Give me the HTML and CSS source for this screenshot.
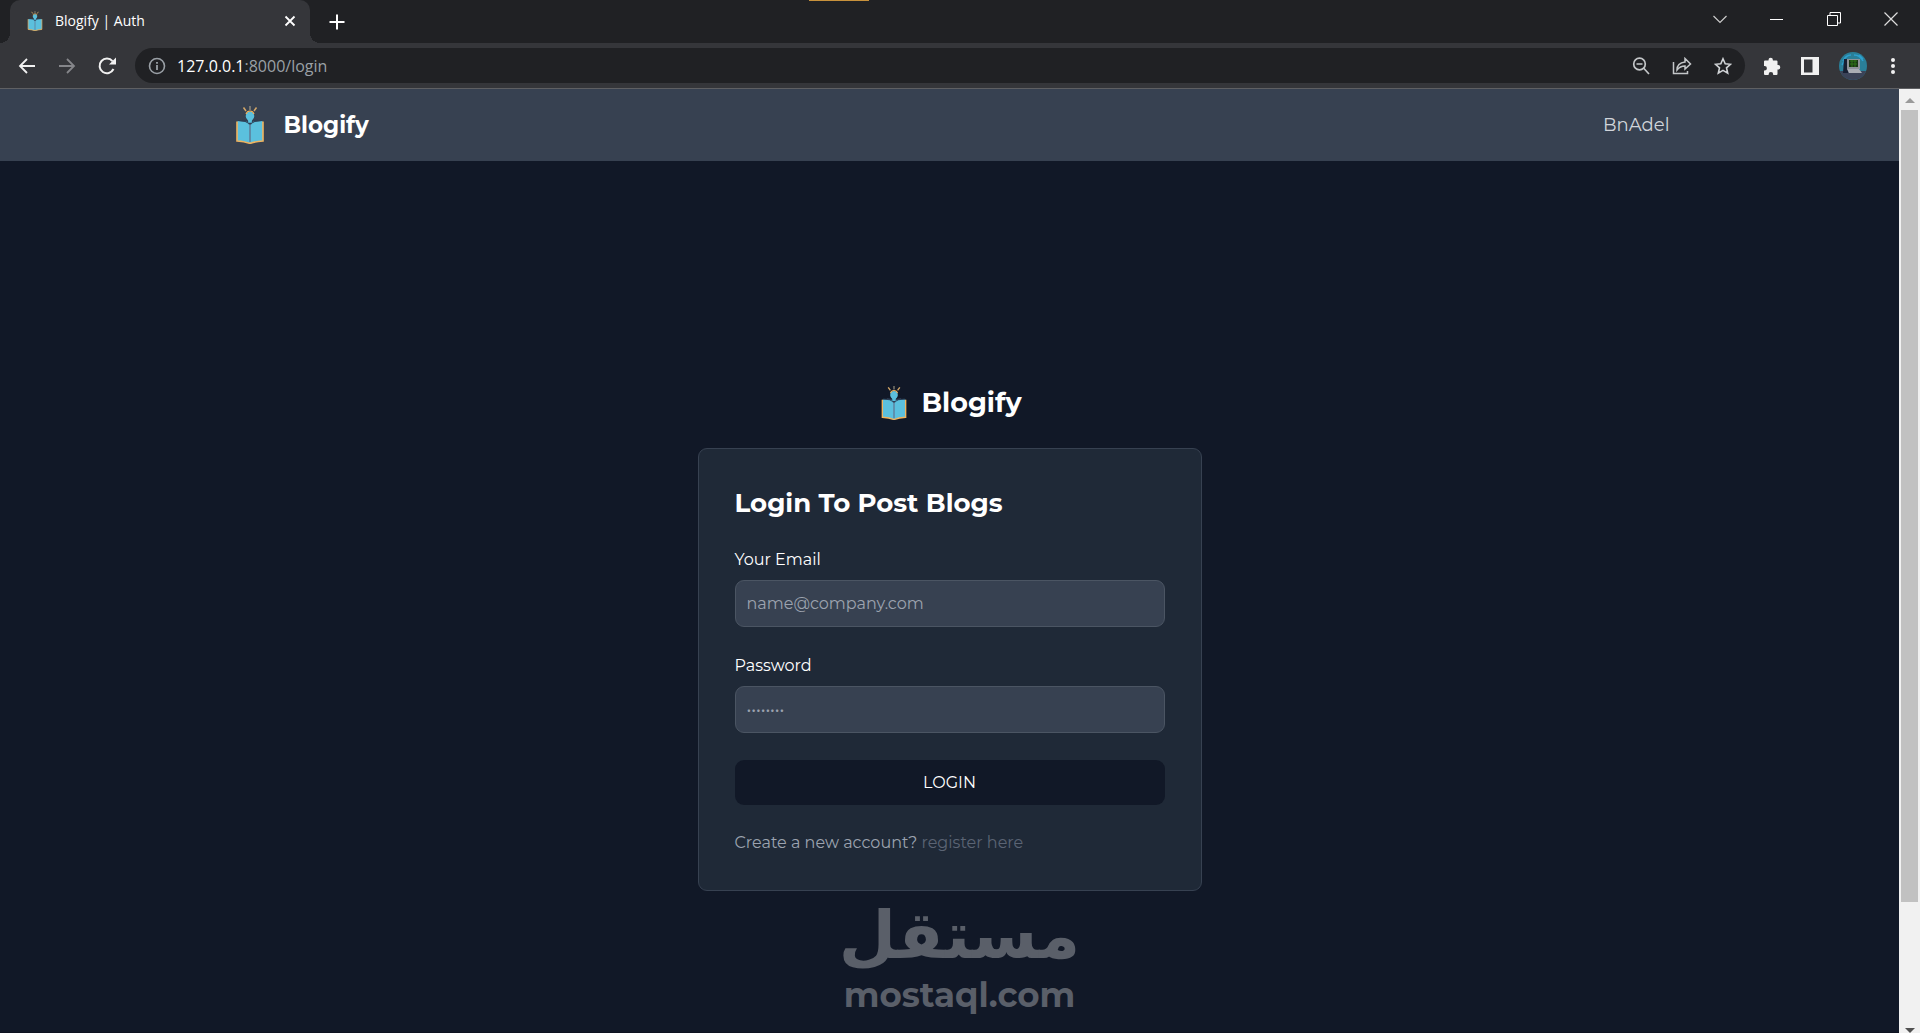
FILE: index.html
```html
<!DOCTYPE html>
<html lang="en">
<head>
    <meta charset="UTF-8">
    <meta name="viewport" content="width=device-width, initial-scale=1.0">
    <title>Blogify | Auth</title>
    <link rel="stylesheet" href="styles.css">
</head>
<body>
    <svg class="sprite" aria-hidden="true">
        <symbol id="logo" viewBox="0 0 28 38">
            <path d="M1 15.500V35q8 .5 13 2.500 5-2 13-2.500V15.500" fill="#5bc0de" stroke="#f0b35e" stroke-width="1.600"/>
            <path d="M2 15q8 .5 12 3 4-2.500 12-3v18q-8 .5-12 2.500-4-2-12-2.500z" fill="#5bc0de"/>
            <path d="M14 18v18" stroke="#5f7f9b" stroke-width="1.600"/>
            <path d="M2 14.500q8 0 12 3.500 4-3.500 12-3.500M6 14q5 0 8 3 3-3 8-3" fill="none" stroke="#2c3e55" stroke-width="1"/>
            <path d="M14 5.500a4.300 4.800 0 0 1 4.300 4.800q0 2-2.300 4.200l-.5 2.500h-3l-.5-2.500q-2.300-2.200-2.300-4.200A4.300 4.800 0 0 1 14 5.500z" fill="#5bc0de"/>
            <path d="M10 8q1-3 4-3t4 3" fill="none" stroke="#f0b35e" stroke-width="1.200"/>
            <path d="M7.500 1.500l2.500 3.500M20.500 1.500L18 5" stroke="#d4a767" stroke-width="1.500"/>
            <path d="M14 0v4" stroke="#a59a84" stroke-width="1.200"/>
            <path d="M12.500 17.500h3" stroke="#2c3e55" stroke-width="1.500"/>
        </symbol>
    </svg>

    <!-- browser window -->
    <div class="tab-bar">
        <span class="top-mark"></span>
        <div class="tab">
            <svg class="tab-icon"><use href="#logo"/></svg>
            <span class="tab-title">Blogify | Auth</span>
            <button type="button" class="icon-btn" aria-label="Close tab">
                <svg width="12" height="12" viewBox="0 0 12 12"><path d="M1.500 1.500l9 9M10.500 1.500l-9 9" stroke="#fff" stroke-width="1.800"/></svg>
            </button>
        </div>
        <button type="button" class="icon-btn new-tab" aria-label="New tab">
            <svg width="16" height="16" viewBox="0 0 16 16"><path d="M8 .5v15M.5 8h15" stroke="#fff" stroke-width="2"/></svg>
        </button>
        <div class="window-buttons">
            <button type="button" class="icon-btn" aria-label="Search tabs">
                <svg width="14" height="14" viewBox="0 0 14 14"><path d="M.5 4L7 10.500 13.500 4" fill="none" stroke="#ccc" stroke-width="1.200"/></svg>
            </button>
            <button type="button" class="icon-btn" aria-label="Minimize">
                <svg width="14" height="14" viewBox="0 0 14 14"><path d="M0 7.500h13" stroke="#fff"/></svg>
            </button>
            <button type="button" class="icon-btn" aria-label="Restore">
                <svg width="14" height="14" viewBox="0 0 14 14"><path d="M.5 3.500h10v10H.5zM3 3V.5h10.500V11H11" fill="none" stroke="#fff"/></svg>
            </button>
            <button type="button" class="icon-btn" aria-label="Close">
                <svg width="14" height="14" viewBox="0 0 14 14"><path d="M.5 .5l13 13M13.500 .5l-13 13" stroke="#ddd" stroke-width="1.200"/></svg>
            </button>
        </div>
    </div>

    <div class="toolbar">
        <button type="button" class="icon-btn" aria-label="Back">
            <svg width="18" height="18" viewBox="0 0 18 18"><path d="M17 9H2M9 2L2 9l7 7" fill="none" stroke="#f1f1f1" stroke-width="1.800"/></svg>
        </button>
        <button type="button" class="icon-btn" aria-label="Forward">
            <svg width="18" height="18" viewBox="0 0 18 18"><path d="M1 9h15M9 2l7 7-7 7" fill="none" stroke="#85868a" stroke-width="1.800"/></svg>
        </button>
        <button type="button" class="icon-btn" aria-label="Reload">
            <svg width="18" height="18" viewBox="0 0 18 18"><path d="M15.500 12A7.300 7.300 0 1 1 14.500 4.200" fill="none" stroke="#f1f1f1" stroke-width="2"/><path d="M18 .5V7.500H11z" fill="#f1f1f1"/></svg>
        </button>
        <div class="address-bar">
            <svg width="18" height="18" viewBox="0 0 18 18"><circle cx="9" cy="9" r="7.500" fill="none" stroke="#9aa0a6" stroke-width="1.600"/><path d="M9 8v5M9 5v1.800" stroke="#9aa0a6" stroke-width="1.800"/></svg>
            <span class="url"><span class="url-host">127.0.0.1</span>:8000/login</span>
            <button type="button" class="icon-btn" aria-label="Zoom">
                <svg width="18" height="18" viewBox="0 0 18 18"><circle cx="7.500" cy="7" r="5.800" fill="none" stroke="#c4c7c9" stroke-width="1.700"/><path d="M4.500 7h6M11.500 11l5.500 6" stroke="#c4c7c9" stroke-width="1.700"/></svg>
            </button>
            <button type="button" class="icon-btn" aria-label="Share">
                <svg width="20" height="18" viewBox="0 0 20 18"><path d="M1.500 5v11.500h14V14M5 13q0-7 8-8V1.500L18.500 7 13 12V9q-5 0-8 4z" fill="none" stroke="#c4c7c9" stroke-width="1.500"/></svg>
            </button>
            <button type="button" class="icon-btn" aria-label="Bookmark">
                <svg width="18" height="18" viewBox="0 0 18 18"><path d="M9 1.800l2.200 5 5.300.5-4 3.600 1.200 5.300L9 13.400l-4.700 2.800 1.200-5.300-4-3.600 5.300-.5z" fill="none" stroke="#d0d3d6" stroke-width="1.600"/></svg>
            </button>
        </div>
        <div class="toolbar-end">
            <button type="button" class="icon-btn" aria-label="Extensions">
                <svg width="18" height="18" viewBox="0 0 18 18"><path d="M1 4.500q0-1 1-1h3.500V3a2.200 2.200 0 0 1 4.400 0v.5h3.600q1 0 1 1V8h.5a2.300 2.300 0 0 1 0 4.600h-.5V17q0 1-1 1h-3.300v-.6a2.300 2.300 0 0 0-4.600 0v.6H2q-1 0-1-1v-3.500h.6a2.300 2.300 0 0 0 0-4.600H1z" fill="#f1f1f1"/></svg>
            </button>
            <button type="button" class="icon-btn" aria-label="Side panel">
                <svg width="18" height="18" viewBox="0 0 18 18"><path fill-rule="evenodd" d="M0 0h18v18H0zM3 2.500v13h8.500v-13z" fill="#f1f1f1"/></svg>
            </button>
            <button type="button" class="icon-btn" aria-label="Profile">
                <svg width="28" height="28" viewBox="0 0 28 28">
                    <clipPath id="avatar"><circle cx="14" cy="14" r="14"/></clipPath>
                    <g clip-path="url(#avatar)">
                        <path d="M0 0h28v28H0z" fill="#2a7f98"/>
                        <path d="M4 9q3-6 8-6M15 3q6 0 9 6M20 3l4 4M3 13l3-5" fill="none" stroke="#2da0d0" stroke-width="1.500"/>
                        <path d="M0 19h28v9H0z" fill="#3b4358"/>
                        <path d="M5 7h4v14H4z" fill="#172033"/>
                        <path d="M8 7h13v10H8z" fill="#8d9399"/>
                        <path d="M10 8h9v7h-9z" fill="#193713"/>
                        <path d="M11 9h7M11 12h7M13 8v7M16 8v7" stroke="#2f7516"/>
                        <path d="M8 17h12l3 4H10z" fill="#a9adb5"/>
                    </g>
                </svg>
            </button>
            <button type="button" class="icon-btn menu-btn" aria-label="Menu">
                <svg width="4" height="18" viewBox="0 0 4 18"><g fill="#f1f1f1"><circle cx="2" cy="3" r="2"/><circle cx="2" cy="9" r="2"/><circle cx="2" cy="15" r="2"/></g></svg>
            </button>
        </div>
    </div>

    <div class="viewport">
        <div class="page">
            <nav class="navbar">
                <div class="navbar-inner">
                    <a href="#" class="brand">
                        <svg class="brand-logo"><use href="#logo"/></svg>
                        Blogify
                    </a>
                    <a href="#" class="nav-link">BnAdel</a>
                </div>
            </nav>

            <main class="auth">
                <a href="#" class="auth-brand">
                    <svg class="auth-logo"><use href="#logo"/></svg>
                    Blogify
                </a>
                <div class="card">
                    <h1>Login To Post Blogs</h1>
                    <form>
                        <div class="form-group">
                            <label for="email">Your Email</label>
                            <input type="email" id="email" placeholder="name@company.com">
                        </div>
                        <div class="form-group">
                            <label for="password">Password</label>
                            <input type="password" id="password" placeholder="••••••••">
                        </div>
                        <button type="submit" class="login-btn">LOGIN</button>
                        <p>Create a new account? <a href="#">register here</a></p>
                    </form>
                </div>
                <div class="watermark">
                    <span class="watermark-ar" lang="ar" dir="rtl">مستقل</span>
                    <span class="watermark-en">mostaql.com</span>
                </div>
            </main>
        </div>

        <div class="scrollbar">
            <svg width="10" height="5" viewBox="0 0 10 5"><path d="M0 5l5-5 5 5z" fill="#9a9a9a"/></svg>
            <div class="scroll-track"><div class="scroll-thumb"></div></div>
            <svg width="10" height="5" viewBox="0 0 10 5"><path d="M0 0h10L5 5z" fill="#505050"/></svg>
        </div>
    </div>
</body>
</html>
```
FILE: styles.css
```css
* {
    box-sizing: border-box;
}
body {
    display: flex;
    flex-direction: column;
    height: 100vh;
    margin: 0;
    overflow: hidden;
    background: #111827;
    font-family: Montserrat, Inter, sans-serif;
    font-size: 16px;
}
a {
    color: inherit;
    text-decoration: none;
}
svg {
    display: block;
    flex: none;
}
.sprite {
    position: absolute;
    width: 0;
    height: 0;
}
.icon-btn {
    display: flex;
    align-items: center;
    justify-content: center;
    padding: 0;
    border: none;
    background: none;
    cursor: pointer;
}

/* browser tabs */
.tab-bar {
    position: relative;
    display: flex;
    height: 43px;
    padding-left: 10px;
    background: #202124;
    font-family: "Open Sans", sans-serif;
}
.top-mark {
    position: absolute;
    top: 0;
    left: 809px;
    width: 60px;
    height: 1px;
    background: #c8923c;
}
.tab {
    position: relative;
    display: flex;
    align-items: center;
    width: 300px;
    padding: 0 14px 2px 15px;
    border-radius: 10px 10px 0 0;
    background: #35363a;
    color: #fff;
    font-size: 14px;
}
.tab::before,
.tab::after {
    content: "";
    position: absolute;
    bottom: 0;
    width: 10px;
    height: 10px;
}
.tab::before {
    right: 100%;
    background: radial-gradient(circle at 0 0, #202124 10px, #35363a 10px);
}
.tab::after {
    left: 100%;
    background: radial-gradient(circle at 100% 0, #202124 10px, #35363a 10px);
}
.tab-icon {
    width: 20px;
    height: 20px;
    margin-right: 10px;
}
.tab-title {
    flex: 1;
}
.new-tab {
    margin-left: 19px;
}
.window-buttons {
    display: flex;
    gap: 43px;
    height: 37px;
    margin-left: auto;
    padding-right: 22px;
}

/* toolbar */
.toolbar {
    display: flex;
    align-items: center;
    height: 46px;
    padding: 0 21px 0 18px;
    gap: 22px;
    border-bottom: 1px solid #5f6063;
    background: #35363a;
}
.address-bar {
    display: flex;
    flex: 1;
    align-items: center;
    gap: 22px;
    height: 35px;
    margin: 0 -4px 0 -3px;
    padding: 0 13px 0 13px;
    border-radius: 18px;
    background: #202124;
}
.url {
    flex: 1;
    margin-left: -11px;
    color: #9aa0a6;
    font-family: "Open Sans", sans-serif;
    font-size: 16px;
}
.url-host {
    color: #fff;
}
.toolbar-end {
    display: flex;
    align-items: center;
    gap: 20px;
}
.menu-btn {
    width: 12px;
}

/* page and its scrollbar */
.viewport {
    display: flex;
    flex: 1;
    min-height: 0;
}
.page {
    flex: 1;
    overflow: hidden;
    border-bottom: 1px solid #0d1220;
}
.scrollbar {
    display: flex;
    flex-direction: column;
    align-items: center;
    width: 21px;
    padding-top: 9px;
    background: #f1f1f1;
}
.scroll-track {
    flex: 1;
    width: 17px;
    margin-top: 7px;
}
.scroll-thumb {
    height: 86.3%;
    background: #c1c1c1;
}

.navbar {
    background: #374151;
}
.navbar-inner {
    display: flex;
    align-items: center;
    justify-content: space-between;
    max-width: 1440px;
    height: 72px;
    margin: 0 auto;
    padding: 0 0 0 6px;
}
.brand {
    display: flex;
    align-items: center;
    gap: 20px;
    color: #fff;
    font-size: 23px;
    font-weight: 700;
}
.brand-logo {
    width: 28px;
    height: 38px;
}
.nav-link {
    color: #d1d5db;
    font-size: 18px;
}

.auth {
    display: flex;
    flex-direction: column;
    align-items: center;
    padding-top: 220px;
}
.auth-brand {
    display: flex;
    align-items: center;
    gap: 14px;
    height: 43px;
    margin-bottom: 24px;
    padding-left: 4px;
    color: #fff;
    font-size: 27px;
    font-weight: 700;
}
.auth-logo {
    width: 26px;
    height: 34px;
}
.card {
    width: 100%;
    max-width: 504px;
    padding: 36px;
    border: 1px solid #374151;
    border-radius: 9px;
    background: #1f2937;
}
.card h1 {
    margin: 0 0 27px;
    color: #fff;
    font-size: 26px;
    font-weight: 700;
    line-height: 36px;
}
.form-group {
    margin-bottom: 27px;
}
.form-group label {
    display: block;
    margin-bottom: 9px;
    color: #fff;
    line-height: 23px;
}
.form-group input {
    display: block;
    width: 100%;
    height: 47px;
    padding: 0 11px;
    border: 1px solid #4b5563;
    border-radius: 9px;
    background: #374151;
    color: #fff;
    font: inherit;
}
.form-group input::placeholder {
    color: #9ca3af;
}
.login-btn {
    display: block;
    width: 100%;
    height: 45px;
    border: none;
    border-radius: 9px;
    background: #111827;
    color: #fff;
    font: inherit;
    cursor: pointer;
}
.card p {
    margin: 26px 0 0;
    color: #9ca3af;
    line-height: 23px;
}
.card p a {
    color: #5b6474;
}

.watermark {
    display: flex;
    flex-direction: column;
    align-items: center;
    margin: 6px 0 0 20px;
    color: #5a5f69;
    font-weight: 700;
}
.watermark-ar {
    font-family: "DejaVu Sans", sans-serif;
    font-size: 66px;
    line-height: 78px;
}
.watermark-en {
    font-size: 34px;
    line-height: 40px;
}
```
